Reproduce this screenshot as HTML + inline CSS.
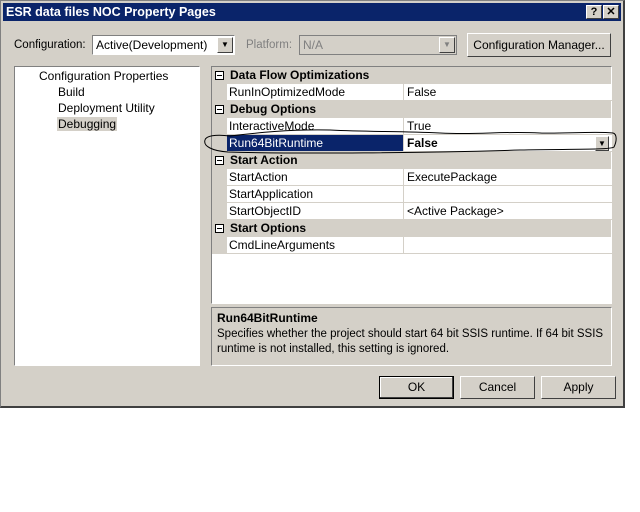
<!DOCTYPE html><html><head><style>
*{box-sizing:border-box;margin:0;padding:0}
body{width:640px;height:512px;background:#fff;position:relative;font-family:"Liberation Sans",sans-serif;font-size:11px;color:#000;overflow:hidden}
.a{position:absolute}
.dlg{left:0;top:0;width:625px;height:408px;background:#d4d0c8;border:1px solid #808080;border-right:2px solid #404040;border-bottom:2px solid #404040}
.title{left:3px;top:3px;width:618px;height:18px;background:#0a246a;color:#fff;font-weight:bold;font-size:12.5px;line-height:18px;padding-left:3px}
.tb{top:5px;width:16px;height:14px;background:#d4d0c8;border:1px solid;border-color:#fff #404040 #404040 #fff;color:#000;font-weight:bold;font-size:11px;text-align:center;line-height:12px}
.sunk{border:1px solid;border-color:#808080 #fff #fff #808080;background:#fff}
.btn{border:1px solid;border-color:#fff #404040 #404040 #fff;background:#d4d0c8;text-align:center;line-height:20px;font-size:12px}
.arr{width:16px;height:16px;background:#d4d0c8;border:1px solid;border-color:#fff #404040 #404040 #fff;font-size:8px;text-align:center;line-height:14px;color:#000}
.row{left:15px;width:385px;height:17px;line-height:16px;border-bottom:1px solid #d4d0c8;background:#fff}
.row .n{position:absolute;left:0;width:177px;height:16px;padding-left:2px;border-right:1px solid #d4d0c8}
.row .v{position:absolute;left:178px;padding-left:2px}
.cat{left:0;width:399px;height:17px;line-height:16px;background:#d4d0c8;font-weight:bold;padding-left:18px}
.cat i{position:absolute;left:3px;top:4px;width:9px;height:9px;border:1px solid #000;background:#fff}
.cat i:after{content:"";position:absolute;left:1px;top:3px;width:5px;height:1px;background:#000}
</style></head><body>
<div class="a dlg"></div>
<div class="a title">ESR data files NOC Property Pages</div>
<div class="a tb" style="left:586px">?</div>
<div class="a tb" style="left:603px">✕</div>
<div class="a" style="left:14px;top:39px;font-size:11.5px">Configuration:</div>
<div class="a sunk" style="left:92px;top:35px;width:143px;height:20px;padding:2px 3px;font-size:12px">Active(Development)</div>
<div class="a arr" style="left:217px;top:37px">▼</div>
<div class="a" style="left:246px;top:39px;color:#808080;font-size:11.5px">Platform:</div>
<div class="a" style="left:299px;top:35px;width:158px;height:20px;border:1px solid #808080;background:#d4d0c8;color:#808080;padding:2px 3px;font-size:12px">N/A</div>
<div class="a arr" style="left:439px;top:37px;color:#808080">▼</div>
<div class="a btn" style="left:467px;top:33px;width:144px;height:24px;line-height:22px">Configuration Manager...</div>
<div class="a sunk" style="left:14px;top:66px;width:186px;height:300px;font-size:12px">
<div class="a" style="left:24px;top:2px">Configuration Properties</div>
<div class="a" style="left:43px;top:18px">Build</div>
<div class="a" style="left:43px;top:34px">Deployment Utility</div>
<div class="a" style="left:42px;top:50px;background:#d4d0c8;padding:0 1px">Debugging</div>
</div>
<div class="a sunk" style="left:211px;top:66px;width:401px;height:238px;font-size:12px">
<div class="a" style="left:0;top:0;width:15px;height:187px;background:#d4d0c8"></div>
<div class="a cat" style="top:0"><i></i>Data Flow Optimizations</div>
<div class="a row" style="top:17px"><span class="n">RunInOptimizedMode</span><span class="v">False</span></div>
<div class="a cat" style="top:34px"><i></i>Debug Options</div>
<div class="a row" style="top:51px"><span class="n">InteractiveMode</span><span class="v">True</span></div>
<div class="a row" style="top:68px"><span class="n" style="background:#0a246a;color:#fff">Run64BitRuntime</span><span class="v" style="font-weight:bold">False</span></div>
<div class="a arr" style="left:383px;top:69px;width:14px;height:15px;line-height:13px">▼</div>
<div class="a cat" style="top:85px"><i></i>Start Action</div>
<div class="a row" style="top:102px"><span class="n">StartAction</span><span class="v">ExecutePackage</span></div>
<div class="a row" style="top:119px"><span class="n">StartApplication</span><span class="v"></span></div>
<div class="a row" style="top:136px"><span class="n">StartObjectID</span><span class="v">&lt;Active Package&gt;</span></div>
<div class="a cat" style="top:153px"><i></i>Start Options</div>
<div class="a row" style="top:170px"><span class="n">CmdLineArguments</span><span class="v"></span></div>
</div>
<div class="a" style="left:211px;top:307px;width:401px;height:59px;border:1px solid;border-color:#808080 #fff #fff #808080;padding:3px 5px;font-size:11.5px;line-height:15px">
<b style="font-size:12px">Run64BitRuntime</b><br>Specifies whether the project should start 64 bit SSIS runtime. If 64 bit SSIS runtime is not installed, this setting is ignored.</div>
<div class="a btn" style="left:379px;top:376px;width:75px;height:23px;border:1px solid #000;box-shadow:inset -1px -1px #404040,inset 1px 1px #fff">OK</div>
<div class="a btn" style="left:460px;top:376px;width:75px;height:23px">Cancel</div>
<div class="a btn" style="left:541px;top:376px;width:75px;height:23px">Apply</div>
<svg class="a" style="left:0;top:0" width="640" height="512"><path d="M230 136 C215 134 206 136 205 140 C203 146 212 151 228 152 C300 154 420 153 520 150 C570 149 610 150 614 147 C617 141 617 134 613 133 C595 131 560 134 540 133 C500 131 480 135 440 133 C400 131 370 132 330 130 C290 129 255 133 230 136" fill="none" stroke="#000" stroke-width="1"/></svg>
</body></html>
